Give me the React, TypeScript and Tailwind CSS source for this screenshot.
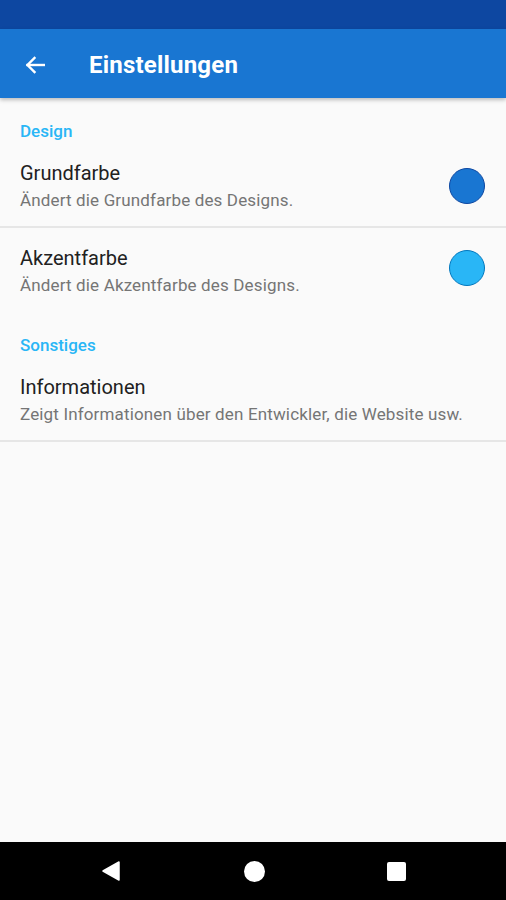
import React from "react";

function Row({ title, subtitle, color, border, textPad = "pt-0" }: { title: string; subtitle: string; color?: string; border?: string; textPad?: string }) {
  return (
    <div className="flex items-center justify-between pl-5 pr-[21px] h-[80px]">
      <div className={`flex flex-col ${textPad}`}>
        <div className="text-[20px] leading-[24px] text-[#212121]">{title}</div>
        <div className="text-[17px] leading-[22px] mt-[4px] tracking-[0.15px] text-[#757575]">{subtitle}</div>
      </div>
      {color && (
        <div className={`w-[36px] h-[36px] rounded-full border ${color} ${border}`} />
      )}
    </div>
  );
}

export default function App() {
  return (
    <div className="w-[506px] h-[900px] flex flex-col bg-[#fafafa] overflow-hidden" style={{ fontFamily: "Roboto, 'Noto Sans', sans-serif" }}>
      <div className="h-[29px] bg-[#0d47a1] shrink-0" />
      <div className="h-[69px] bg-[#1976d2] shrink-0 flex items-center pt-[3px] shadow-[0_2px_4px_rgba(0,0,0,0.25)] z-10">
        <div className="w-[89px] flex items-center pl-[25px]">
          <svg width="20" height="20" viewBox="0 0 20 20" fill="none" stroke="white" strokeWidth="2.4" strokeLinecap="square">
            <path d="M19 10H2.5" />
            <path d="M9.5 3L2.5 10l7 7" />
          </svg>
        </div>
        <div className="text-white text-[24px] font-bold tracking-[0.2px]">Einstellungen</div>
      </div>
      <div className="flex-1 flex flex-col">
        <div className="pl-5 pt-[23px] h-[48px] text-[17px] leading-[20px] font-medium text-[#29b6f6]">Design</div>
        <Row title="Grundfarbe" subtitle="Ändert die Grundfarbe des Designs." color="bg-[#1976d2]" border="border-[#0d47a1]" />
        <div className="h-[2px] bg-[#e6e6e6]" />
        <Row title="Akzentfarbe" subtitle="Ändert die Akzentfarbe des Designs." color="bg-[#29b6f6]" border="border-[#0277bd]" textPad="pt-[6px]" />
        <div className="pl-5 pt-[27px] h-[52px] text-[17px] leading-[20px] font-medium text-[#29b6f6]">Sonstiges</div>
        <Row title="Informationen" subtitle="Zeigt Informationen über den Entwickler, die Website usw." />
        <div className="h-[2px] bg-[#e6e6e6]" />
      </div>
      <div className="h-[58px] bg-black shrink-0 flex items-center justify-between px-[100px]">
        <svg width="22" height="22" viewBox="0 0 22 22"><path d="M19 2v18L3 11z" fill="white" stroke="white" strokeWidth="1.5" strokeLinejoin="round" /></svg>
        <div className="w-[21px] h-[21px] rounded-full bg-white" />
        <div className="w-[19px] h-[19px] rounded-[2px] bg-white" />
      </div>
    </div>
  );
}
